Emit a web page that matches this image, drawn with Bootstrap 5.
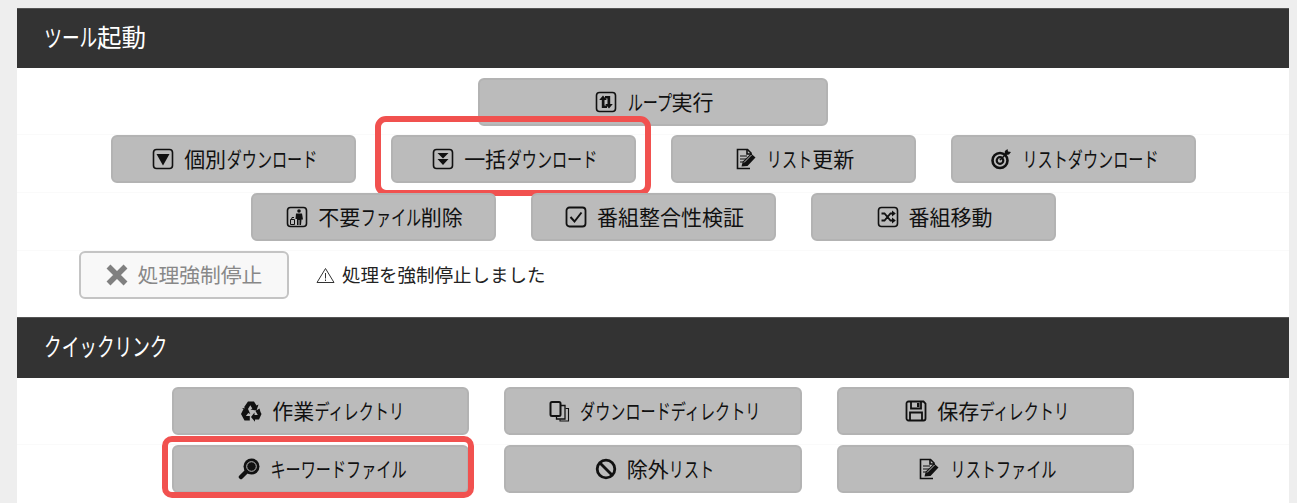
<!DOCTYPE html>
<html lang="ja">
<head>
<meta charset="utf-8">
<title>ツール起動</title>
<link href="https://cdn.jsdelivr.net/npm/bootstrap@5.3.0/dist/css/bootstrap.min.css" rel="stylesheet">
<style>
html,body{height:503px;overflow:hidden}
body{background:#eee;font-family:"Noto Sans CJK JP","Liberation Sans",sans-serif;color:#111;padding:8px 8px 0 17px}
.sheet{background:#fff;height:495px}
.sect-head{background:#333;color:#fff;height:60px;padding:0 0 3px 27px;font-size:24.500px;display:flex;align-items:center;margin:0;font-weight:400;border-top:1px solid #555;line-height:1}
.sect-head.next{height:61px}
.tool-row{display:flex;justify-content:center;gap:35px;padding-bottom:9px;border-top:1px solid #fafafa}
.tool-row.first{border-top:0;padding-top:10px;padding-bottom:8px}
.tool-row.top{border-top:0;padding-top:9px}
.act{height:48px;background:#bbb;border:2px solid #b3b3b3;border-radius:6px;color:#111;font-size:21px;display:flex;align-items:center;justify-content:center;gap:10px;padding:0 0 1px 3px;position:relative;line-height:1}
.w-loop{width:350px}.w-tool{width:245px}.w-link{width:297.5px}
.ic{width:22px;height:22px;flex:none;fill:none;stroke:#111;stroke-width:1.6}
.ic .s{fill:#111;stroke:none}
.kn{display:inline-block;transform:scaleX(.72);margin:0 calc(var(--n)*-.14em);white-space:nowrap}
.k3{--n:3}.k4{--n:4}.k6{--n:6}.k7{--n:7}.k9{--n:9}.k12{--n:12}
.stop-row{display:flex;align-items:center;padding-left:62px;padding-bottom:18px;border-top:1px solid #fafafa;gap:27px;font-size:18.5px}
.act-off{width:210px;height:48px;background:#f8f8f8;border:2px solid #c4c4c4;border-radius:6px;color:#888;font-size:20.8px;display:flex;align-items:center;justify-content:center;gap:10px;padding:0 0 1px;line-height:1}
.act-off .ic{stroke:#808080}
.warn{display:flex;align-items:center;gap:7px;color:#222}
.warn svg{width:19px;height:17px;fill:none;stroke:#333;stroke-width:1}
.hilite{position:absolute;border:6px solid #f1514f;border-radius:11px;pointer-events:none}
.hl-a{left:-18px;right:-17px;top:-21px;bottom:-15px}
.hl-b{left:-12px;right:-6.500px;top:-11px;bottom:-7px;border-radius:10px}
</style>
</head>
<body>
<div class="sheet">
  <h2 class="sect-head"><span><span class="kn k3">ツール</span>起動</span></h2>
  <div class="tool-row first">
    <button class="act w-loop" type="button"><svg class="ic" viewBox="0 0 22 22"><rect x="1.500" y="1.500" width="19" height="19" rx="3"/><path class="s" d="M8 4.500l3.800 4.500H9.500v5.500h2.500V17H6.800V9H4.200zM14 17.500L10.200 13h2.300V7.500H10V5h5.200v8h2.600z"/></svg><span><span class="kn k3">ループ</span>実行</span></button>
  </div>
  <div class="tool-row">
    <button class="act w-tool" type="button"><svg class="ic" viewBox="0 0 22 22"><rect x="1.500" y="1.500" width="19" height="19" rx="3"/><path class="s" d="M4.500 6h13L11 17.500z"/></svg><span>個別<span class="kn k6">ダウンロード</span></span></button>
    <button class="act w-tool" type="button"><svg class="ic" viewBox="0 0 22 22"><rect x="1.500" y="1.500" width="19" height="19" rx="3"/><path class="s" d="M5.500 5h11L11 10.500zM5.500 11h11L11 17z"/></svg><span>一括<span class="kn k6">ダウンロード</span></span><i class="hilite hl-a"></i></button>
    <button class="act w-tool" type="button"><svg class="ic" viewBox="0 0 22 22"><path d="M16 8V5l-3.500-3.500H2.500v19H15"/><path d="M12 2v4h4"/><path d="M5 8h7M5 11h6M5 14h3" stroke-width="1.200"/><path class="s" d="M6.500 18.500l1.300-5L16 5.500l4.500 4-8 8.500z"/><path d="M9 14.500l7.500-7.500" stroke="#bbb" stroke-width="1"/></svg><span><span class="kn k3">リスト</span>更新</span></button>
    <button class="act w-tool" type="button"><svg class="ic" viewBox="0 0 22 22"><circle cx="10" cy="12.500" r="7.500" stroke-width="2.600"/><circle cx="10" cy="12.500" r="3.300" stroke-width="2.200"/><path class="s" d="M9.300 11.800L14.500 6.500l.4-3.500L17.500 1l.5 2.500L21 4l-2 2.500-3 .6-5.300 5.400z"/></svg><span><span class="kn k9">リストダウンロード</span></span></button>
  </div>
  <div class="tool-row">
    <button class="act w-tool" type="button"><svg class="ic" viewBox="0 0 22 22"><rect x="1.500" y="1.500" width="19" height="19" rx="3"/><circle class="s" cx="13" cy="5" r="1.800"/><path class="s" d="M10 7.500h6l1 6h-1.500l-.5 5.500h-1.500v-5h-1v5H11V13H9.500z"/><path d="M4.500 13.500h4v5h-4zM5.500 13.500l.5-2h2" stroke-width="1"/></svg><span>不要<span class="kn k4">ファイル</span>削除</span></button>
    <button class="act w-tool" type="button"><svg class="ic" viewBox="0 0 22 22"><rect x="1.500" y="1.500" width="19" height="19" rx="3" stroke-width="1.800"/><path d="M5.500 11l4 4.500 7-9" stroke-width="2"/></svg><span>番組整合性検証</span></button>
    <button class="act w-tool" type="button"><svg class="ic" viewBox="0 0 22 22"><rect x="1.500" y="1.500" width="19" height="19" rx="3"/><path d="M4.500 7.500h3l6 7h2M4.500 14.500h3l6-7h2" stroke-width="1.800"/><path class="s" d="M15 4.500l3.800 3-3.800 3zM15 11.500l3.800 3-3.800 3z"/></svg><span>番組移動</span></button>
  </div>
  <div class="stop-row">
    <button class="act-off" type="button" disabled><svg class="ic" viewBox="0 0 22 22"><path d="M2.500 2.500l17 17M19.500 2.500l-17 17" stroke-width="5.500"/></svg><span>処理強制停止</span></button>
    <div class="warn"><svg viewBox="0 0 19 17"><path d="M9.500 1.500L18 15.500H1z"/><path d="M9.500 6v5.500M9.500 12.500v1.500"/></svg><span>処理を強制停止しました</span></div>
  </div>
  <h2 class="sect-head next"><span><span class="kn k7">クイックリンク</span></span></h2>
  <div class="tool-row top">
    <button class="act w-link" type="button"><svg class="ic" viewBox="0 0 22 22"><path class="s" d="M8 1.500h6l2.500 4 2-1-2 6-6-1 1.800-1-2-3.300-2.800 4.500L4 7.300zM20.500 12l1 2-2.500 5.500h-4v2.300L11 17l3.500-4.500v2.500h3.300L15.500 11l4-2.500zM1 14l2.500-5 -1.700-1 6 .5 2.500 5.500-2-1L5.800 16h4v4.500H4.500z"/></svg><span>作業<span class="kn k6">ディレクトリ</span></span></button>
    <button class="act w-link" type="button"><svg class="ic" viewBox="0 0 22 22"><rect x="1.500" y="2" width="10" height="14" rx="1.500" stroke-width="2"/><path d="M12 5.500h4V19H7.500v-2.500" stroke-width="1.300"/><path d="M16.500 8.500h3V21H11v-1.500" stroke-width="1.100"/></svg><span><span class="kn k12">ダウンロードディレクトリ</span></span></button>
    <button class="act w-link" type="button"><svg class="ic" viewBox="0 0 22 22"><path d="M3.500 1.500h15l2 2v15a2 2 0 0 1-2 2h-15a2 2 0 0 1-2-2v-15a2 2 0 0 1 2-2z" stroke-width="1.800"/><path d="M6 2v6.500h10V2M5 20v-7.500h12V20" stroke-width="1.800"/><path class="s" d="M12 3h2.500v4H12z"/></svg><span>保存<span class="kn k6">ディレクトリ</span></span></button>
  </div>
  <div class="tool-row">
    <button class="act w-link" type="button"><svg class="ic" viewBox="0 0 22 22"><circle class="s" cx="13.500" cy="8.500" r="8"/><circle cx="13.500" cy="8.500" r="4.800" stroke="#bbb" stroke-width="1"/><circle class="s" cx="14.500" cy="7.500" r="2"/><path d="M8 14l-5 5" stroke-width="4.500" stroke-linecap="round"/></svg><span><span class="kn k9">キーワードファイル</span></span><i class="hilite hl-b"></i></button>
    <button class="act w-link" type="button"><svg class="ic" viewBox="0 0 22 22"><circle cx="11" cy="11" r="8.800" stroke-width="2.800"/><path d="M5 5l12 12" stroke-width="2.800"/></svg><span>除外<span class="kn k3">リスト</span></span></button>
    <button class="act w-link" type="button"><svg class="ic" viewBox="0 0 22 22"><path d="M16 8V5l-3.500-3.500H2.500v19H15"/><path d="M12 2v4h4"/><path d="M5 8h7M5 11h6M5 14h3" stroke-width="1.200"/><path class="s" d="M6.500 18.500l1.300-5L16 5.500l4.500 4-8 8.500z"/><path d="M9 14.500l7.500-7.500" stroke="#bbb" stroke-width="1"/></svg><span><span class="kn k7">リストファイル</span></span></button>
  </div>
</div>
<script src="https://cdn.jsdelivr.net/npm/bootstrap@5.3.0/dist/js/bootstrap.bundle.min.js"></script>
</body>
</html>
